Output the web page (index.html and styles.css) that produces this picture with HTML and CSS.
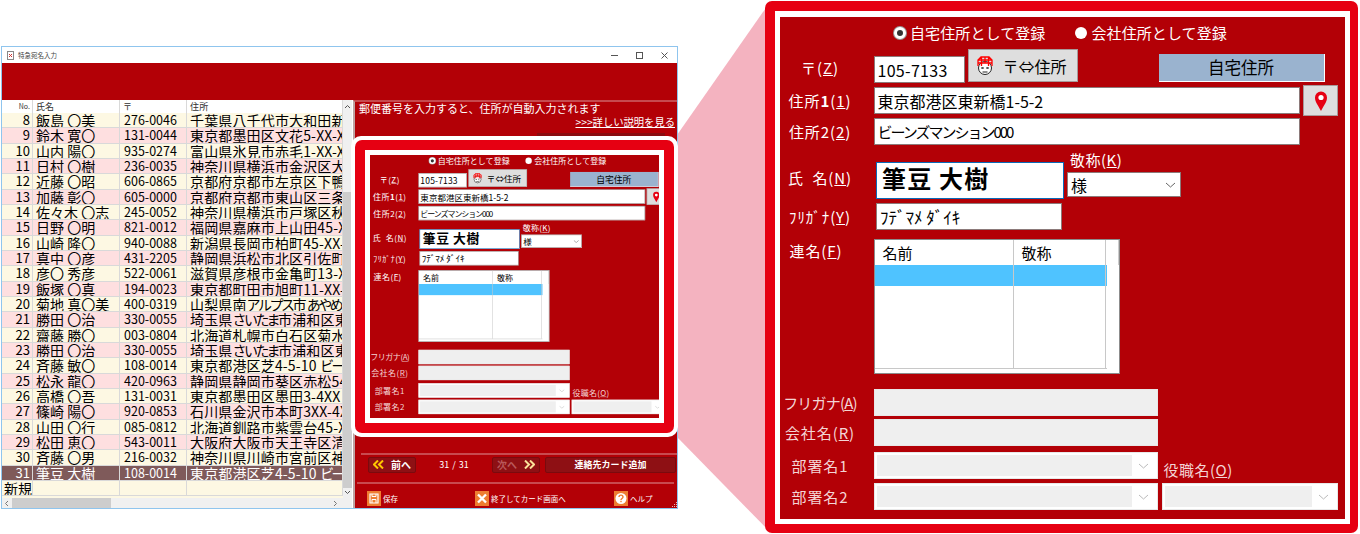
FILE: index.html
```html
<!DOCTYPE html>
<html lang="ja">
<head>
<meta charset="utf-8">
<title>特急宛名入力</title>
<link rel="stylesheet" href="styles.css">
</head>
<body>
<div class="canvas">
  <svg class="callout" width="1360" height="534" viewBox="0 0 1360 534"><polygon points="677,135 770,2 770,532 677,437" fill="#f4b3c0"/></svg>

  <section class="window">
    <header class="titlebar">
      <div class="title">
        <svg class="app-icon" width="7" height="9" viewBox="0 0 7 9"><rect x=".5" y=".5" width="6" height="8" fill="#fff" stroke="#888"/><path d="M2 3l3 3M5 3L2 6" stroke="#c33"/></svg>
        <span>特急宛名入力</span>
      </div>
      <div class="win-controls">
        <svg width="9" height="9" viewBox="0 0 9 9"><path d="M1 4.5h7" stroke="#555"/></svg>
        <svg width="9" height="9" viewBox="0 0 9 9"><rect x="1.5" y="1.5" width="6" height="6" fill="none" stroke="#555"/></svg>
        <svg width="9" height="9" viewBox="0 0 9 9"><path d="M1.5 1.5l6 6M7.5 1.5l-6 6" stroke="#555"/></svg>
      </div>
    </header>
    <div class="band"></div>
    <div class="main">
      <div class="grid-pane">
        <div class="grid-area">
          <div class="grid">
            <div class="row head"><span class="no">No.</span><span>氏名</span><span>〒</span><span>住所</span></div>
            <div class="rows">
              <div class="row"><span class="no">8</span><span>飯島 〇美</span><span class="zip">276-0046</span><span>千葉県八千代市大和田新田</span></div>
              <div class="row"><span class="no">9</span><span>鈴木 寛〇</span><span class="zip">131-0044</span><span>東京都墨田区文花5-XX-XX</span></div>
              <div class="row"><span class="no">10</span><span>山内 陽〇</span><span class="zip">935-0274</span><span>富山県氷見市赤毛1-XX-XX</span></div>
              <div class="row"><span class="no">11</span><span>日村 〇樹</span><span class="zip">236-0035</span><span>神奈川県横浜市金沢区大道</span></div>
              <div class="row"><span class="no">12</span><span>近藤 〇昭</span><span class="zip">606-0865</span><span>京都府京都市左京区下鴨東</span></div>
              <div class="row"><span class="no">13</span><span>加藤 彰〇</span><span class="zip">605-0000</span><span>京都府京都市東山区三条通</span></div>
              <div class="row"><span class="no">14</span><span>佐々木 〇志</span><span class="zip">245-0052</span><span>神奈川県横浜市戸塚区秋葉</span></div>
              <div class="row"><span class="no">15</span><span>日野 〇明</span><span class="zip">821-0012</span><span>福岡県嘉麻市上山田45-XX</span></div>
              <div class="row"><span class="no">16</span><span>山崎 隆〇</span><span class="zip">940-0088</span><span>新潟県長岡市柏町45-XX-X</span></div>
              <div class="row"><span class="no">17</span><span>真中 〇彦</span><span class="zip">431-2205</span><span>静岡県浜松市北区引佐町伊</span></div>
              <div class="row"><span class="no">18</span><span>彦〇 秀彦</span><span class="zip">522-0061</span><span>滋賀県彦根市金亀町13-XX</span></div>
              <div class="row"><span class="no">19</span><span>飯塚 〇真</span><span class="zip">194-0023</span><span>東京都町田市旭町11-XX-X</span></div>
              <div class="row"><span class="no">20</span><span>菊地 真〇美</span><span class="zip">400-0319</span><span>山梨県南<span class="narrow">アルプス</span>市<span class="narrow">あやめが</span>丘</span></div>
              <div class="row"><span class="no">21</span><span>勝田 〇治</span><span class="zip">330-0055</span><span>埼玉県<span class="narrow">さいたま</span>市浦和区東高砂</span></div>
              <div class="row"><span class="no">22</span><span>齋藤 勝〇</span><span class="zip">003-0804</span><span>北海道札幌市白石区菊水四</span></div>
              <div class="row"><span class="no">23</span><span>勝田 〇治</span><span class="zip">330-0055</span><span>埼玉県<span class="narrow">さいたま</span>市浦和区東高砂</span></div>
              <div class="row"><span class="no">24</span><span>斉藤 敏〇</span><span class="zip">108-0014</span><span>東京都港区芝4-5-10 <span class="narrow">ビーン</span>ズ</span></div>
              <div class="row"><span class="no">25</span><span>松永 龍〇</span><span class="zip">420-0963</span><span>静岡県静岡市葵区赤松54-XX</span></div>
              <div class="row"><span class="no">26</span><span>高橋 〇吾</span><span class="zip">131-0031</span><span>東京都墨田区墨田3-4XX ジ</span></div>
              <div class="row"><span class="no">27</span><span>篠崎 陽〇</span><span class="zip">920-0853</span><span>石川県金沢市本町3XX-4XX</span></div>
              <div class="row"><span class="no">28</span><span>山田 〇行</span><span class="zip">085-0812</span><span>北海道釧路市紫雲台45-XX</span></div>
              <div class="row"><span class="no">29</span><span>松田 恵〇</span><span class="zip">543-0011</span><span>大阪府大阪市天王寺区清水</span></div>
              <div class="row"><span class="no">30</span><span>斉藤 〇男</span><span class="zip">216-0032</span><span>神奈川県川崎市宮前区神木</span></div>
              <div class="row selected"><span class="no">31</span><span>筆豆 大樹</span><span class="zip">108-0014</span><span>東京都港区芝4-5-10 <span class="narrow">ビーン</span>ズ</span></div>
              <div class="row new"><span class="newlabel">新規</span><span></span><span></span><span></span></div>
            </div>
          </div>
          <div class="vscroll">
            <svg width="7" height="5" viewBox="0 0 7 5"><path d="M1 4l2.5-2.5L6 4" fill="none" stroke="#555"/></svg>
            <div class="vtrack"><div class="vthumb"></div></div>
            <svg width="7" height="5" viewBox="0 0 7 5"><path d="M1 1l2.5 2.5L6 1" fill="none" stroke="#555"/></svg>
          </div>
        </div>
        <div class="hscroll">
          <svg width="5" height="7" viewBox="0 0 5 7"><path d="M4 1L1.5 3.500 4 6" fill="none" stroke="#777"/></svg>
          <div class="hthumb"></div>
          <svg width="5" height="7" viewBox="0 0 5 7"><path d="M1 1l2.500 2.500L1 6" fill="none" stroke="#777"/></svg>
        </div>
      </div>
      <div class="side">
        <p class="hint">郵便番号を入力すると、住所が自動入力されます</p>
        <a class="more">&gt;&gt;&gt;詳しい説明を見る</a>
        <div class="tab-behind"></div>
        <div class="nav-rule first"></div>
        <div class="nav">
          <button class="nav-btn prev"><svg width="11" height="9" viewBox="0 0 11 9"><path d="M5 .5L1 4.500l4 4M10 .5L6 4.500l4 4" fill="none" stroke="#ffc800" stroke-width="2"/></svg><span>前へ</span></button>
          <span class="page">31 / 31</span>
          <button class="nav-btn next"><span>次へ</span><svg width="11" height="9" viewBox="0 0 11 9"><path d="M1 .5l4 4-4 4M6 .5l4 4-4 4" fill="none" stroke="#fbe29a" stroke-width="2"/></svg></button>
          <button class="nav-btn add">連絡先カード追加</button>
        </div>
        <div class="nav-rule second"></div>
        <div class="actions">
          <span class="action save"><svg width="14" height="15" viewBox="0 0 14 15"><rect width="14" height="15" fill="#ee7d31"/><path d="M3 3h8v9H3z" fill="none" stroke="#fff" stroke-width="1.200"/><path d="M5 3v2.500h4V3M5 12V8.500h4V12" fill="none" stroke="#fff"/></svg>保存</span>
          <span class="action quit"><svg width="14" height="15" viewBox="0 0 14 15"><rect width="14" height="15" fill="#ee7d31"/><path d="M3 3.500l8 8M11 3.500l-8 8" stroke="#fff" stroke-width="2.400"/></svg>終了してカード画面へ</span>
          <span class="action help"><svg width="14" height="15" viewBox="0 0 14 15"><rect width="14" height="15" fill="#ee7d31"/><circle cx="7" cy="7.500" r="5.500" fill="#fff"/><path d="M5 6c0-2.500 4-2.500 4 0 0 1.500-2 1.500-2 3" fill="none" stroke="#ee7d31" stroke-width="1.400"/><rect x="6.300" y="9.800" width="1.400" height="1.400" fill="#ee7d31"/></svg>ヘルプ</span>
          <svg class="grip" width="6" height="6" viewBox="0 0 6 6"><path d="M5 0h1v1H5zM3 2h1v1H3zM5 2h1v1H5zM1 4h1v1H1zM3 4h1v1H3zM5 4h1v1H5z" fill="#e9b6b6"/></svg>
        </div>
      </div>
    </div>
  </section>

  <!-- highlight over the window: same form at thumbnail scale -->
  <div class="frame mini">
    <div class="frame-red">
      <div class="frame-white">
        <div class="thumb">
          <div class="form">
            <div class="f-row radios"><span class="radio on"></span><span class="radio-text">自宅住所として登録</span><span class="radio off"></span><span class="radio-text">会社住所として登録</span></div>
            <div class="f-row zip-row"><label class="lab">〒(<u>Z</u>)</label><div class="inp zip-inp">105-7133</div><button class="btn conv"><svg width="20" height="22" viewBox="0 0 20 22"><circle cx="10" cy="13" r="6.500" fill="#fff" stroke="#222"/><path d="M3 11V5l3-3h8l3 3v6M3 5h14M6.500 2v9M10 2v6M13.500 2v9M3 8h14" fill="none" stroke="#f00" stroke-width="1.300"/><path d="M6.500 12l2 2M8.500 12l-2 2M11.500 12l2 2M13.500 12l-2 2M7.500 17h5" stroke="#222"/></svg><span>〒⇔住所</span></button><div class="home-tag">自宅住所</div></div>
            <div class="f-row addr1"><label class="lab">住所<b>1</b>(<u>1</u>)</label><div class="inp addr">東京都港区東新橋1-5-2</div><button class="btn pin"><svg width="14" height="22" viewBox="0 0 14 22"><path d="M7 21C4 15 1 12 1 7.500a6 6 0 0 1 12 0C13 12 10 15 7 21z" fill="#e60012"/><circle cx="7" cy="7.500" r="2.600" fill="#fff"/></svg></button></div>
            <div class="f-row addr2"><label class="lab">住所2(<u>2</u>)</label><div class="inp addr building">ビーンズマンション000</div></div>
            <div class="f-row name-row"><label class="lab name-lab">氏&nbsp;&nbsp;名(<u>N</u>)</label><div class="inp name">筆豆 大樹</div><div class="honor"><label class="lab-up">敬称(<u>K</u>)</label><div class="inp sel">様<svg class="chev" width="11" height="6" viewBox="0 0 11 6"><path d="M1 1l4.500 4L10 1" fill="none" stroke="#666"/></svg></div></div></div>
            <div class="f-row kana"><label class="lab">ﾌﾘｶﾞﾅ(<u>Y</u>)</label><div class="inp kana-inp">ﾌﾃﾞﾏﾒ ﾀﾞｲｷ</div></div>
            <div class="f-row list-row"><label class="lab list-lab">連名(<u>F</u>)</label>
              <div class="list">
                <div class="list-cols">
                  <div class="lrow lhead"><span>名前</span><span>敬称</span></div>
                  <div class="lrow lsel"><span></span><span></span></div>
                  <div class="lrow lbody"><span></span><span></span></div>
                </div>
                <div class="lscroll"></div>
              </div>
            </div>
            <div class="f-row furi"><label class="lab dim tight">フリガナ(<u>A</u>)</label><div class="inp off-inp wide"></div></div>
            <div class="f-row comp"><label class="lab dim">会社名(<u>R</u>)</label><div class="inp off-inp wide"></div></div>
            <div class="f-row dept1"><label class="lab dim">部署名1</label><div class="inp off-sel wide"><i></i><svg width="11" height="6" viewBox="0 0 11 6"><path d="M1 1l4.500 4L10 1" fill="none" stroke="#bbb"/></svg></div><label class="lab-post dim">役職名(<u>O</u>)</label></div>
            <div class="f-row dept2"><label class="lab dim">部署名2</label><div class="inp off-sel wide"><i></i><svg width="11" height="6" viewBox="0 0 11 6"><path d="M1 1l4.500 4L10 1" fill="none" stroke="#bbb"/></svg></div><div class="inp off-sel post"><i></i><svg width="11" height="6" viewBox="0 0 11 6"><path d="M1 1l4.500 4L10 1" fill="none" stroke="#bbb"/></svg></div></div>
          </div>
        </div>
      </div>
    </div>
  </div>

  <div class="frame big">
    <div class="frame-red">
      <div class="frame-white">
        <div class="form">
          <div class="f-row radios"><span class="radio on"></span><span class="radio-text">自宅住所として登録</span><span class="radio off"></span><span class="radio-text">会社住所として登録</span></div>
          <div class="f-row zip-row"><label class="lab">〒(<u>Z</u>)</label><div class="inp zip-inp">105-7133</div><button class="btn conv"><svg width="20" height="22" viewBox="0 0 20 22"><circle cx="10" cy="13" r="6.500" fill="#fff" stroke="#222"/><path d="M3 11V5l3-3h8l3 3v6M3 5h14M6.500 2v9M10 2v6M13.500 2v9M3 8h14" fill="none" stroke="#f00" stroke-width="1.300"/><path d="M6.500 12l2 2M8.500 12l-2 2M11.500 12l2 2M13.500 12l-2 2M7.500 17h5" stroke="#222"/></svg><span>〒⇔住所</span></button><div class="home-tag">自宅住所</div></div>
          <div class="f-row addr1"><label class="lab">住所<b>1</b>(<u>1</u>)</label><div class="inp addr">東京都港区東新橋1-5-2</div><button class="btn pin"><svg width="14" height="22" viewBox="0 0 14 22"><path d="M7 21C4 15 1 12 1 7.500a6 6 0 0 1 12 0C13 12 10 15 7 21z" fill="#e60012"/><circle cx="7" cy="7.500" r="2.600" fill="#fff"/></svg></button></div>
          <div class="f-row addr2"><label class="lab">住所2(<u>2</u>)</label><div class="inp addr building">ビーンズマンション000</div></div>
          <div class="f-row name-row"><label class="lab name-lab">氏&nbsp;&nbsp;名(<u>N</u>)</label><div class="inp name">筆豆 大樹</div><div class="honor"><label class="lab-up">敬称(<u>K</u>)</label><div class="inp sel">様<svg class="chev" width="11" height="6" viewBox="0 0 11 6"><path d="M1 1l4.500 4L10 1" fill="none" stroke="#666"/></svg></div></div></div>
          <div class="f-row kana"><label class="lab">ﾌﾘｶﾞﾅ(<u>Y</u>)</label><div class="inp kana-inp">ﾌﾃﾞﾏﾒ ﾀﾞｲｷ</div></div>
          <div class="f-row list-row"><label class="lab list-lab">連名(<u>F</u>)</label>
            <div class="list">
              <div class="list-cols">
                <div class="lrow lhead"><span>名前</span><span>敬称</span></div>
                <div class="lrow lsel"><span></span><span></span></div>
                <div class="lrow lbody"><span></span><span></span></div>
              </div>
              <div class="lscroll"></div>
            </div>
          </div>
          <div class="f-row furi"><label class="lab dim tight">フリガナ(<u>A</u>)</label><div class="inp off-inp wide"></div></div>
          <div class="f-row comp"><label class="lab dim">会社名(<u>R</u>)</label><div class="inp off-inp wide"></div></div>
          <div class="f-row dept1"><label class="lab dim">部署名1</label><div class="inp off-sel wide"><i></i><svg width="11" height="6" viewBox="0 0 11 6"><path d="M1 1l4.500 4L10 1" fill="none" stroke="#bbb"/></svg></div><label class="lab-post dim">役職名(<u>O</u>)</label></div>
          <div class="f-row dept2"><label class="lab dim">部署名2</label><div class="inp off-sel wide"><i></i><svg width="11" height="6" viewBox="0 0 11 6"><path d="M1 1l4.500 4L10 1" fill="none" stroke="#bbb"/></svg></div><div class="inp off-sel post"><i></i><svg width="11" height="6" viewBox="0 0 11 6"><path d="M1 1l4.500 4L10 1" fill="none" stroke="#bbb"/></svg></div></div>
        </div>
      </div>
    </div>
  </div>
</div>
</body>
</html>
```
FILE: styles.css
```css
* { box-sizing: border-box; }
html, body { margin: 0; padding: 0; background: #fff; }
body { font-family: "Noto Sans CJK JP", "Liberation Sans", sans-serif; color: #000; }
.canvas { position: relative; width: 1360px; height: 534px; overflow: hidden; }
.callout { position: absolute; left: 0; top: 0; }
button { font-family: inherit; padding: 0; margin: 0; border: 0; }

/* application window */
.window { position: absolute; left: 1px; top: 46px; width: 677px; height: 463px; border: 1px solid #8fc5ee; background: #fff; display: flex; flex-direction: column; }
.titlebar { height: 16px; display: flex; justify-content: space-between; align-items: center; background: #fff; flex: none; }
.title { display: flex; align-items: center; gap: 4px; padding-left: 5px; font-size: 6.500px; color: #444; }
.win-controls { display: flex; gap: 16px; padding-right: 8px; }
.band { height: 37px; background: #b30006; flex: none; }
.main { flex: 1; display: flex; min-height: 0; }
.grid-pane { width: 350px; display: flex; flex-direction: column; flex: none; }
.grid-area { flex: 1; display: flex; min-height: 0; }
.grid { width: 341px; flex: none; overflow: hidden; background: #fdf8e3; }
.row { display: grid; grid-template-columns: 31px 87px 67px 156px; height: 15.340px; font-size: 14px; line-height: 14px; }
.row > span { border-right: 1px solid #d9d9d9; border-bottom: 1px solid #d9d9d9; padding-left: 3px; white-space: nowrap; overflow: hidden; }
.row > span:last-child { letter-spacing: .150px; }
.narrow { letter-spacing: -2.500px; }
.row.head { height: 13px; background: #fff; font-size: 9px; line-height: 13px; color: #333; }
.row.head > span { border-bottom: 0; }
.row.head .no { font-size: 7px; }
.rows .row:nth-child(even) { background: #fedfe0; }
.row .no { text-align: right; padding: 0 2px 0 0; }
.rows .no { font-size: 13px; }
.row .zip { font-size: 12.500px; padding-left: 4px; }
.rows .row.selected { background: #7f5a5a; color: #fff; }
.row.new { height: 15px; }
.newlabel { grid-column: 1; padding-left: 2px !important; font-size: 14px; }
.vscroll { width: 9px; background: #f0f0f0; display: flex; flex-direction: column; align-items: center; padding: 4px 0 3px; gap: 2px; }
.vtrack { flex: 1; width: 100%; padding-top: 81px; }
.vthumb { height: 100%; background: #cdcdcd; }
.hscroll { height: 10px; background: #f0f0f0; display: flex; align-items: center; padding: 0 14px 0 2px; flex: none; }
.hthumb { width: 99px; height: 100%; margin: 0 auto 0 3px; background: #cdcdcd; }
.side { flex: 1; background: #b30006; border-left: 2px solid #bfa3a3; border-top: 2px solid #c64a4f; color: #fff; position: relative; display: flex; flex-direction: column; margin-left: 1px; }
.hint { margin: 0; padding: 0 0 0 4px; font-size: 11px; line-height: 13px; }
.more { align-self: flex-end; font-size: 10.300px; line-height: 13px; text-decoration: underline; margin-right: 2px; }
.tab-behind { width: 128px; height: 8px; background: #8a0c10; margin: 5px 0 0 182px; }
.nav-rule { height: 2px; background: #c84a4f; flex: none; }
.nav-rule.first { margin: 312px 0 0 6px; }
.nav-rule.second { margin: 9px 3px 0 2px; }
.nav { display: flex; align-items: center; height: 17px; margin-top: 2px; padding-left: 13px; }
.nav-btn { background: #8e1014; color: #fff; height: 16px; display: flex; align-items: center; justify-content: center; gap: 7px; font-size: 10px; font-weight: 700; border: 1px solid #7a0a0e; border-radius: 2px; }
.nav-btn.prev, .nav-btn.next { width: 48px; }
.nav-btn.next { color: #b9585a; }
.page { width: 76px; text-align: center; font-size: 9px; word-spacing: 1px; }
.nav-btn.add { width: 131px; margin-left: 5px; font-size: 9px; }
.actions { display: flex; align-items: center; height: 20px; margin-top: 4px; font-size: 7.500px; position: relative; flex: none; }
.action { display: flex; align-items: center; gap: 2px; }
.action.save { margin-left: 12px; width: 108px; }
.action.quit { width: 139px; }
.grip { position: absolute; right: 0; bottom: 0; }

/* red highlight frames */
.frame { position: absolute; }
.frame-red { background: #e60012; width: 100%; height: 100%; }
.frame-white { background: #fff; height: 100%; }
.mini { left: 351px; top: 136px; width: 327px; height: 301px; background: #fff; border-radius: 10px; padding: 4px; }
.mini .frame-red { padding: 10px; border-radius: 7px; }
.mini .frame-white { padding: 5px; }
.thumb { width: 289px; height: 263px; overflow: hidden; background: #b30006; }
.thumb .form { transform: translate(-1.500px, -2.700px) scale(.532, .531); transform-origin: 0 0; }
.big { left: 765px; top: 1px; width: 593px; height: 532px; }
.big .frame-red { padding: 10px 8px 9px 10px; border-radius: 7px; }
.big .frame-white { padding: 6px 5px 5px 5px; }

/* address form, laid out at the enlarged size */
.form { width: 565px; height: 502px; background: #b30006; display: flex; flex-direction: column; color: #fff; font-size: 15px; flex: none; }
.f-row { display: flex; flex: none; align-items: center; }
.lab { width: 80px; margin-right: 13.500px; text-align: center; white-space: nowrap; line-height: 18px; flex: none; letter-spacing: .900px; }
.lab.tight { letter-spacing: -.800px; }
.inp { background: #fff; color: #000; border: 1.500px solid #8c7a7a; padding-left: 3px; white-space: nowrap; display: flex; align-items: center; flex: none; }
.dim { color: #f3d5d5; }
.radios { height: 32px; padding-left: 114px; }
.radio { width: 12px; height: 12px; border-radius: 50%; background: #fff; flex: none; margin-right: 4px; }
.radio.on { border: 3px solid #fff; background: #333; box-shadow: 0 0 0 1px #999; }
.radio-text { line-height: 20px; margin-right: 30px; letter-spacing: .100px; }
.zip-row { height: 34px; align-items: flex-end; }
.zip-row .lab { align-self: center; padding-top: 4px; }
.zip-inp { width: 91px; height: 27px; font-size: 16px; letter-spacing: .300px; }
.btn { background: #dedede; border: 1.500px solid #a89a9a; display: flex; align-items: center; flex: none; }
.conv { width: 110px; height: 33px; margin: 0 0 1px 3px; font-size: 16px; padding-left: 6px; gap: 8px; color: #000; }
.home-tag { width: 166px; height: 28px; margin: 0 0 1px 81px; background: #9ab3cf; color: #000; text-align: center; font-size: 16.500px; line-height: 26px; border-right: 1px solid #fff; border-bottom: 1.500px solid #fff; }
.addr1 { height: 31px; margin-top: 2px; }
.addr { width: 426.500px; height: 27px; font-size: 16px; }
.addr.building { font-size: 15px; letter-spacing: -2px; }
.pin { width: 35px; height: 31px; margin-left: 3px; justify-content: center; }
.addr2 { height: 27px; margin-top: 2px; }
.name-row { height: 49px; margin-top: 5px; align-items: flex-end; }
.name-lab { align-self: center; padding-top: 6px; }
.name { width: 188px; height: 37px; margin-left: 2.500px; border: 1.500px solid #0a6ab8; font-size: 24px; font-weight: 700; padding: 0 0 6px 5px; letter-spacing: 1.200px; }
.honor { display: flex; flex-direction: column; margin-left: 3px; margin-bottom: 2px; }
.lab-up { line-height: 22px; height: 23px; padding-left: 3px; letter-spacing: .500px; }
.sel { width: 114px; height: 25px; font-size: 16px; justify-content: space-between; padding-right: 4px; }
.kana { height: 27px; margin-top: 4px; }
.kana-inp { width: 186px; height: 27px; margin-left: 2.500px; font-size: 17px; }
.list-row { height: 135px; margin-top: 9px; align-items: flex-start; }
.list-lab { padding-top: 3px; padding-right: 8px; }
.list { width: 246.500px; height: 135px; background: #fff; border: 1.500px solid #8c8c8c; display: flex; }
.list-cols { width: 232px; flex: none; display: flex; flex-direction: column; height: 100%; padding-bottom: 4px; }
.lrow { display: grid; grid-template-columns: 139px 92px; }
.lrow > span { border-right: 1.500px solid #c8c8c8; color: #000; padding-left: 8px; }
.lhead { height: 25px; line-height: 25px; font-size: 15px; }
.lsel { height: 21px; background: #4fc3ff; }
.lbody { flex: 1; border-bottom: 1.500px solid #c8c8c8; }
.lscroll { width: 1.500px; height: 25px; background: #ccc; margin-left: 11px; }
.furi { height: 27px; margin-top: 15px; }
.comp { height: 27px; margin-top: 3px; }
.dept1 { height: 27px; margin-top: 6px; }
.dept2 { height: 27px; margin-top: 4px; }
.off-inp, .off-sel { background: #efefef; border: 1.500px solid #e8e8e8; height: 27px; }
.wide { width: 284px; }
.off-sel { background: #fff; padding: 2px 8px 2px 2px; justify-content: space-between; align-items: stretch; }
.off-sel i { flex: 1; background: #efefef; margin-right: 6px; display: block; }
.off-sel svg { align-self: center; flex: none; }
.post { width: 176px; margin-left: 4px; }
.lab-post { margin: 9px 0 0 6px; line-height: 18px; white-space: nowrap; letter-spacing: .500px; }
```
